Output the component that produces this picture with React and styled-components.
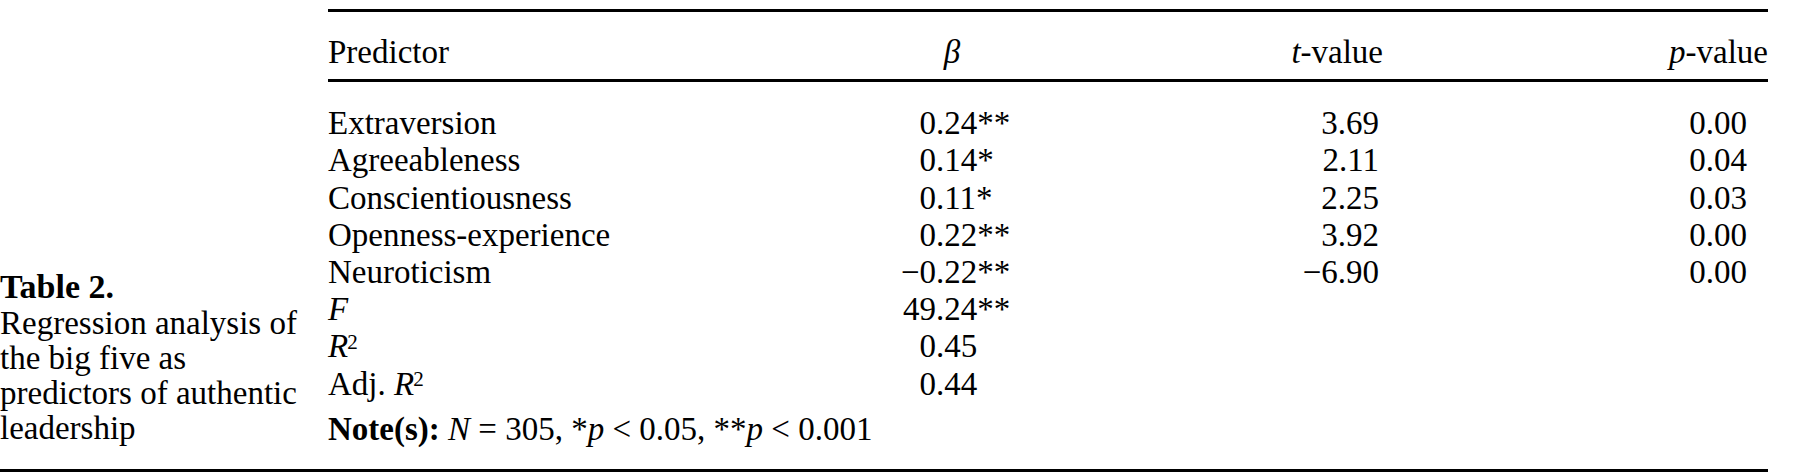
import React from "react";
import styled, { createGlobalStyle } from "styled-components";

const GlobalStyle = createGlobalStyle`
  body {
    margin: 0;
    background: #fff;
    color: #000;
    font-family: "Liberation Serif", "Times New Roman", serif;
  }
`;

const Page = styled.div`
  width: 1768px;
  padding-top: 9px;
`;

const Body = styled.div`
  display: flex;
  align-items: flex-end;
`;

const Caption = styled.div`
  width: 328px;
  flex-shrink: 0;
  box-sizing: border-box;
  padding: 0 16px 2px 0;
  font-size: 33px;
  line-height: 35px;
`;

const CaptionTitle = styled.div`
  margin-bottom: 3px;
  font-weight: bold;
  font-size: 34px;
  line-height: 33px;
`;

const TableBox = styled.div`
  flex: 1;
  border-top: 3px solid #000;
  font-size: 33px;
  line-height: 37.2px;
`;

const Row = styled.div`
  display: grid;
  grid-template-columns: 552px 144px 359px 385px;
`;

const Head = styled(Row)`
  padding: 22px 0 8px;
  border-bottom: 3px solid #000;
`;

const Rows = styled.div`
  padding-top: 23px;
`;

const Cell = styled.div`
  text-align: ${(p) => p.$align || "left"};
  padding-right: ${(p) => p.$inset || 0}px;
  white-space: nowrap;
`;

const Decimal = styled.div`
  display: grid;
  grid-template-columns: 56px auto;
  justify-content: start;
  white-space: nowrap;

  span:first-child {
    text-align: right;
  }
`;

const Note = styled.div`
  margin-top: 8px;
  white-space: nowrap;
`;

const I = styled.i`
  font-style: italic;
`;

const Sup = styled.span`
  position: relative;
  top: -0.42em;
  margin-left: -1px;
  font-size: 0.64em;
  line-height: 0;
`;

const BottomRule = styled.div`
  margin-top: 21px;
  height: 3px;
  background: #000;
`;

const Sq = () => (
  <>
    <I>R</I>
    <Sup>2</Sup>
  </>
);

const rows = [
  { label: "Extraversion", beta: ["0", ".24**"], t: "3.69", p: "0.00" },
  { label: "Agreeableness", beta: ["0", ".14*"], t: "2.11", p: "0.04" },
  { label: "Conscientiousness", beta: ["0", ".11*"], t: "2.25", p: "0.03" },
  { label: "Openness-experience", beta: ["0", ".22**"], t: "3.92", p: "0.00" },
  { label: "Neuroticism", beta: ["\u22120", ".22**"], t: "\u22126.90", p: "0.00" },
  { label: <I>F</I>, beta: ["49", ".24**"] },
  { label: <Sq />, beta: ["0", ".45"] },
  {
    label: (
      <>
        Adj. <Sq />
      </>
    ),
    beta: ["0", ".44"],
  },
];

export default function App() {
  return (
    <>
      <GlobalStyle />
      <Page>
        <Body>
          <Caption>
            <CaptionTitle>Table 2.</CaptionTitle>
            Regression analysis of the big five as predictors of authentic
            leadership
          </Caption>
          <TableBox>
            <Head>
              <Cell>Predictor</Cell>
              <Cell $align="center">
                <I>β</I>
              </Cell>
              <Cell $align="right">
                <I>t</I>-value
              </Cell>
              <Cell $align="right">
                <I>p</I>-value
              </Cell>
            </Head>
            <Rows>
              {rows.map((r, i) => (
                <Row key={i}>
                  <Cell>{r.label}</Cell>
                  <Decimal>
                    <span>{r.beta[0]}</span>
                    <span>{r.beta[1]}</span>
                  </Decimal>
                  <Cell $align="right" $inset={4}>
                    {r.t}
                  </Cell>
                  <Cell $align="right" $inset={21}>
                    {r.p}
                  </Cell>
                </Row>
              ))}
            </Rows>
            <Note>
              <b>Note(s):</b> <I>N</I> = 305, *<I>p</I> &lt; 0.05, **<I>p</I>{" "}
              &lt; 0.001
            </Note>
          </TableBox>
        </Body>
        <BottomRule />
      </Page>
    </>
  );
}
